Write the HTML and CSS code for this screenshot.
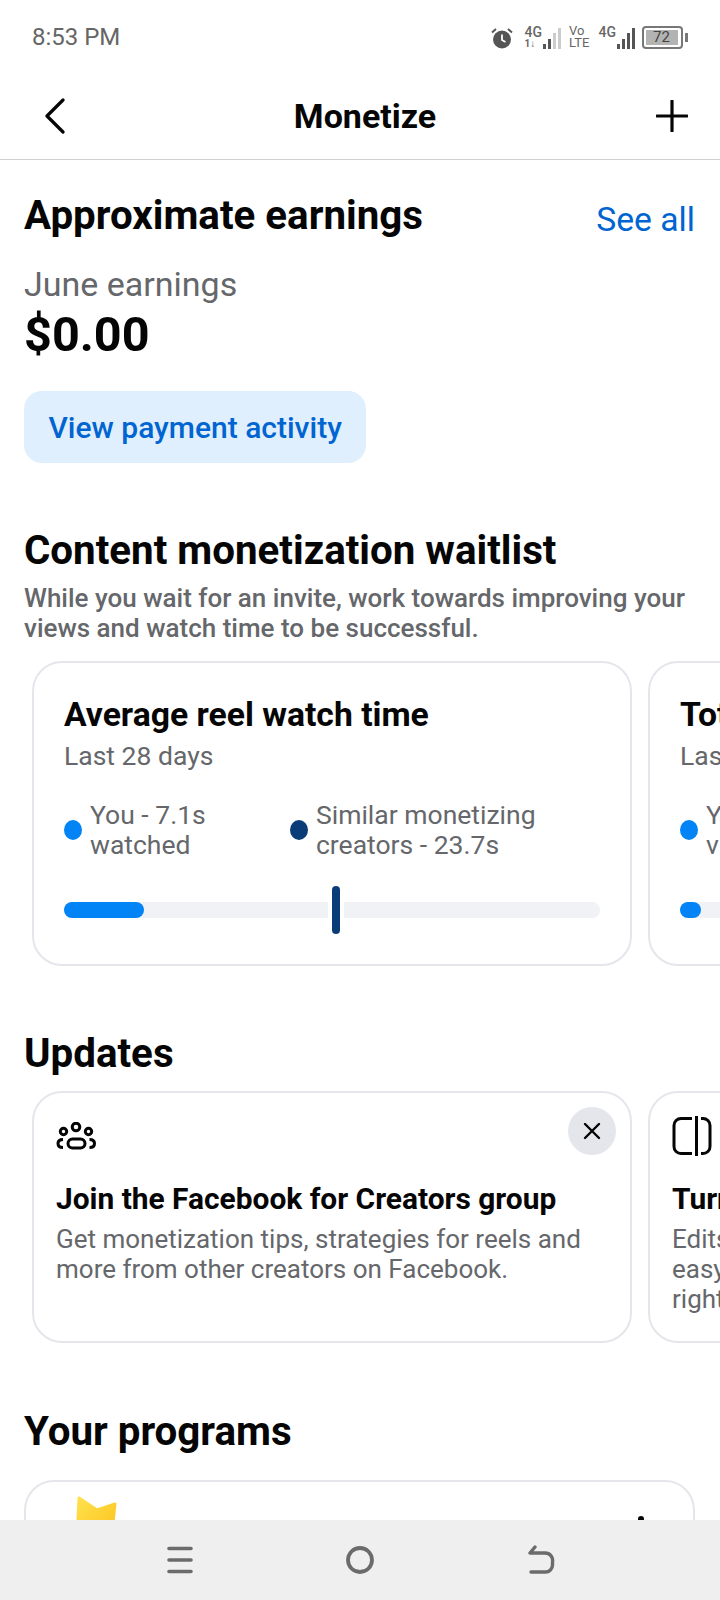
FILE: index.html
```html
<!DOCTYPE html>
<html lang="en">
<head>
	<meta charset="UTF-8">
	<title>Monetize</title>
	<link rel="stylesheet" href="styles.css">
</head>
<body>
	<div id="status-bar">
		<span class="time">8:53 PM</span>
		<div class="status-icons">
			<svg class="alarm" width="22" height="22" viewBox="0 0 22 22"><circle cx="11" cy="12.500" r="9" fill="#555"/><path d="M11 7.500v5.500l3.500 2" fill="none" stroke="#fff" stroke-width="1.800"/><path d="M1 5.500 5 2M21 5.500 17 2" stroke="#555" stroke-width="2"/></svg>
			<div class="net">
				<div class="net-text"><b>4G</b><i>1↓</i></div>
				<div class="signal"><u class="s1"></u><u class="s2"></u><u class="s3 off"></u><u class="s4 off"></u></div>
			</div>
			<div class="volte"><span>Vo</span><span>LTE</span></div>
			<div class="net">
				<div class="net-text top"><b>4G</b></div>
				<div class="signal"><u class="s1"></u><u class="s2"></u><u class="s3"></u><u class="s4"></u></div>
			</div>
			<div class="battery">
				<div class="battery-body"><div class="battery-fill">72</div></div>
				<div class="battery-tip"></div>
			</div>
		</div>
	</div>
	<div id="top-nav">
		<svg width="26" height="36" viewBox="0 0 26 36"><path d="M21 2 5 18l16 16" fill="none" stroke="#050505" stroke-width="3.200" stroke-linecap="round" stroke-linejoin="round"/></svg>
		<h1>Monetize</h1>
		<svg width="32" height="32" viewBox="0 0 32 32"><path d="M16 1v30M1 16h30" stroke="#050505" stroke-width="3.200" stroke-linecap="round"/></svg>
	</div>
	<div id="main">
		<div class="earn-head">
			<h2>Approximate earnings</h2>
			<a class="see-all">See all</a>
		</div>
		<p class="month">June earnings</p>
		<p class="amount">$0.00</p>
		<a class="pay-btn">View payment activity</a>

		<h2 class="wait-title">Content monetization waitlist</h2>
		<p class="wait-text">While you wait for an invite, work towards improving your views and watch time to be successful.</p>
		<div class="scroller">
			<div class="card stat-card">
				<h3>Average reel watch time</h3>
				<p class="period">Last 28 days</p>
				<div class="legend">
					<div class="legend-item you"><span class="dot"></span><span>You - 7.1s<br>watched</span></div>
					<div class="legend-item"><span class="dot dark"></span><span>Similar monetizing<br>creators - 23.7s</span></div>
				</div>
				<div class="bar">
					<div class="bar-fill" style="width: 15%"></div>
					<div class="bar-mark" style="left: 50.700%"></div>
				</div>
			</div>
			<div class="card stat-card">
				<h3>Total views</h3>
				<p class="period">Last 28 days</p>
				<div class="legend">
					<div class="legend-item you"><span class="dot"></span><span>You - 2<br>views</span></div>
				</div>
				<div class="bar">
					<div class="bar-fill" style="width: 4%"></div>
				</div>
			</div>
		</div>

		<h2 class="updates-title">Updates</h2>
		<div class="scroller updates">
			<div class="card update-card">
				<div class="update-top">
					<svg class="people" width="40" height="28" viewBox="0 0 40 28" fill="none" stroke="#050505" stroke-width="3"><circle cx="20" cy="5" r="3.800"/><circle cx="7.500" cy="9.500" r="3.200"/><circle cx="32.500" cy="9.500" r="3.200"/><rect x="12" y="17" width="17" height="9" rx="4.500"/><path d="M7 17.500c-3 0-5 1.500-5 4s2 4 5 4M33.500 17.500c3 0 5 1.500 5 4s-2 4-5 4"/></svg>
					<span class="close"><svg width="18" height="18" viewBox="0 0 18 18"><path d="m2 2 14 14M16 2 2 16" stroke="#050505" stroke-width="2.400" stroke-linecap="round"/></svg></span>
				</div>
				<h4>Join the Facebook for Creators group</h4>
				<p>Get monetization tips, strategies for reels and more from other creators on Facebook.</p>
			</div>
			<div class="card update-card">
				<div class="update-top">
					<svg class="split" width="40" height="40" viewBox="0 0 40 40" fill="none" stroke="#050505" stroke-width="3"><path d="M20 2.500H9a7 7 0 0 0-7 7v21a7 7 0 0 0 7 7h11M29 2.500h2a7 7 0 0 1 7 7v21a7 7 0 0 1-7 7h-2M24.500 0v40"/></svg>
				</div>
				<h4>Turn on Edits</h4>
				<p>Edits makes it<br>easy to create<br>right from your phone.</p>
			</div>
		</div>

		<h2 class="programs-title">Your programs</h2>
		<div class="card program-card">
			<svg width="44" height="44" viewBox="0 0 44 44"><defs><linearGradient id="star" x1="0" y1="0" x2="1" y2="1"><stop offset="0" stop-color="#ffe14d"/><stop offset="1" stop-color="#fcc21b"/></linearGradient></defs><path d="M3 2 21 14 39 8 35 44H1z" fill="url(#star)" stroke="url(#star)" stroke-width="3" stroke-linejoin="round"/></svg>
			<svg class="more" width="8" height="8" viewBox="0 0 8 8"><circle cx="4" cy="4" r="3" fill="#050505"/></svg>
		</div>
	</div>
	<div id="bottom-nav">
		<svg width="26" height="28" viewBox="0 0 26 28" fill="none" stroke="#6b6b6b" stroke-width="3.600" stroke-linecap="round"><path d="M2 2.500h22M2 14h22M2 25.500h22"/></svg>
		<svg width="28" height="28" viewBox="0 0 28 28" fill="none" stroke="#6b6b6b" stroke-width="3.800"><circle cx="14" cy="14" r="12"/></svg>
		<svg width="28" height="30" viewBox="0 0 28 30" fill="none" stroke="#6b6b6b" stroke-width="3.400" stroke-linecap="round" stroke-linejoin="round"><path d="M8 2 3 8h15a7.500 7.500 0 0 1 7.500 9v3a7 7 0 0 1-7 7H4"/></svg>
	</div>
</body>
</html>
```

FILE: styles.css
```css
html, body{
	margin: 0;
	height: 100%;
}
body{
	display: flex;
	flex-direction: column;
	height: 1600px;
	overflow: hidden;
	background: #fff;
	color: #050505;
	font-family: Roboto, "Liberation Sans", sans-serif;
}
h1, h2, h3, h4, p{
	margin: 0;
}

#status-bar{
	display: flex;
	align-items: center;
	justify-content: space-between;
	height: 73px;
	padding: 0 32px;
	flex: none;
	box-sizing: border-box;
	color: #666;
}
.time{
	font-size: 24px;
}
.status-icons{
	display: flex;
	align-items: flex-end;
	gap: 9px;
}
.alarm{
	margin-right: 3px;
}
.net{
	display: flex;
	align-items: flex-end;
	gap: 1px;
}
.net-text{
	display: flex;
	flex-direction: column;
}
.net-text b{
	font-weight: 500;
	font-size: 14px;
	line-height: 13px;
}
.net-text i{
	font-style: normal;
	font-weight: 700;
	font-size: 10px;
	line-height: 10px;
}
.net-text.top{
	margin-bottom: 10px;
}
.signal{
	display: flex;
	align-items: flex-end;
	gap: 2px;
	height: 21px;
}
.signal u{
	display: block;
	width: 3px;
	background: #555;
}
.signal .s1{ height: 5px; }
.signal .s2{ height: 10px; }
.signal .s3{ height: 16px; }
.signal .s4{ height: 21px; }
.signal .off{
	background: #ccc;
}
.volte{
	display: flex;
	flex-direction: column;
	margin-left: -1px;
	font-size: 13px;
	line-height: 12px;
}
.battery{
	display: flex;
	align-items: center;
	gap: 2px;
	margin-left: -2px;
}
.battery-body{
	width: 41px;
	height: 23px;
	padding: 2px;
	box-sizing: border-box;
	border: 2px solid #777;
	border-radius: 4px;
}
.battery-fill{
	width: 25px;
	height: 100%;
	padding-left: 7px;
	background: #b3b3b3;
	color: #444;
	font-size: 15px;
	line-height: 15px;
}
.battery-tip{
	width: 3px;
	height: 9px;
	background: #777;
}

#top-nav{
	display: flex;
	align-items: center;
	justify-content: space-between;
	height: 87px;
	padding: 0 32px 0 42px;
	flex: none;
	box-sizing: border-box;
	border-bottom: 1px solid #ced0d4;
}
#top-nav h1{
	margin-left: 6px;
	font-size: 34px;
	font-weight: 700;
}

#main{
	flex: 1;
	min-height: 0;
	overflow: hidden;
	padding: 33px 0 0 24px;
}
h2{
	font-size: 40.300px;
	font-weight: 700;
	line-height: 46px;
}
.earn-head{
	display: flex;
	align-items: center;
	justify-content: space-between;
	padding-right: 25px;
}
.see-all{
	margin-top: 6px;
	color: #0064d1;
	font-size: 33.700px;
}
.month{
	margin-top: 25px;
	color: #65676b;
	font-size: 34px;
	line-height: 40px;
}
.amount{
	margin-top: 3px;
	font-size: 48.600px;
	font-weight: 700;
	line-height: 56px;
}
.pay-btn{
	display: inline-block;
	margin-top: 28px;
	padding: 0 24.500px;
	height: 72px;
	background: #e0effd;
	border-radius: 18px;
	color: #0064d1;
	font-size: 30px;
	font-weight: 500;
	line-height: 73px;
}

.wait-title{
	margin-top: 65px;
}
.wait-text{
	width: 670px;
	margin-top: 9px;
	color: #65676b;
	font-size: 26px;
	font-weight: 500;
	line-height: 30px;
}
.scroller{
	display: flex;
	gap: 16px;
	margin-top: 18px;
	margin-left: 8px;
	overflow: hidden;
}
.scroller.updates{
	margin-top: 14px;
}
.card{
	flex: none;
	box-sizing: border-box;
	width: 600px;
	background: #fff;
	border: 2px solid #e4e6eb;
	border-radius: 30px;
}
.stat-card{
	height: 305px;
	padding: 33px 30px 0;
}
.stat-card h3{
	font-size: 33.700px;
	font-weight: 700;
	line-height: 38px;
}
.period{
	margin-top: 7px;
	color: #65676b;
	font-size: 26.500px;
	line-height: 30px;
}
.legend{
	display: flex;
	margin-top: 29px;
}
.legend-item{
	display: flex;
	align-items: center;
	gap: 8px;
	color: #65676b;
	font-size: 26.500px;
	line-height: 30px;
}
.legend-item.you{
	width: 226px;
}
.dot{
	flex: none;
	width: 18px;
	height: 20px;
	border-radius: 50%;
	background: #0284f6;
}
.dot.dark{
	background: #0a3d78;
}
.bar{
	position: relative;
	height: 16px;
	margin-top: 42px;
	border-radius: 8px;
	background: #f0f2f5;
}
.bar-fill{
	height: 100%;
	border-radius: 8px;
	background: #0284f6;
}
.bar-mark{
	position: absolute;
	top: -16px;
	width: 8px;
	height: 48px;
	margin-left: -4px;
	border-radius: 4px;
	background: #0a3d78;
	box-shadow: 0 0 0 4px #fff;
}

.updates-title{
	margin-top: 65px;
}
.update-card{
	height: 252px;
	padding: 14px 14px 0 22px;
}
.update-top{
	display: flex;
	align-items: center;
	justify-content: space-between;
	height: 48px;
}
.people{
	margin-top: 10px;
}
.split{
	margin-top: 10px;
}
.close{
	display: flex;
	align-items: center;
	justify-content: center;
	width: 48px;
	height: 48px;
	border-radius: 50%;
	background: #e4e6eb;
}
.update-card h4{
	margin-top: 26px;
	font-size: 29.900px;
	font-weight: 700;
	line-height: 36px;
}
.update-card p{
	margin-top: 7px;
	color: #65676b;
	font-size: 26px;
	line-height: 30px;
}

.programs-title{
	margin-top: 66px;
}
.program-card{
	display: flex;
	align-items: flex-start;
	justify-content: space-between;
	width: 671px;
	height: 200px;
	margin-top: 25px;
	padding: 14px 48px 0 50px;
}
.more{
	margin-top: 19px;
}

#bottom-nav{
	display: flex;
	align-items: center;
	justify-content: center;
	gap: 153px;
	height: 80px;
	padding-left: 1px;
	flex: none;
	background: #efefef;
}
```
